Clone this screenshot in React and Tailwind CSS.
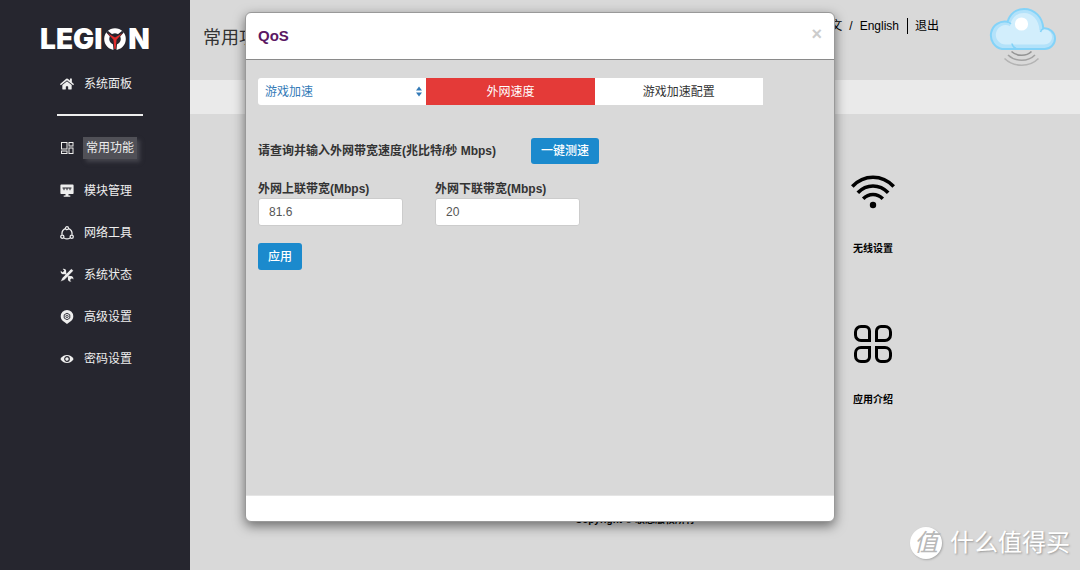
import { FaHome } from 'react-icons/fa';

const menu = [
    { label: '常用功能', icon: PanelIcon, active: true },
    { label: '模块管理', icon: ModuleIcon },
    { label: '网络工具', icon: NetworkIcon },
    { label: '系统状态', icon: ToolsIcon },
    { label: '高级设置', icon: AdvancedIcon },
    { label: '密码设置', icon: EyeIcon },
];

const shortcuts = [
    { label: '无线设置', icon: WifiIcon },
    { label: '应用介绍', icon: AppsIcon },
];

function PanelIcon() {
    return (
        <svg viewBox="0 0 14 14" className="size-3.5" fill="none" stroke="currentColor" strokeWidth="1">
            <rect x="1.500" y="1.500" width="5.500" height="6.500" />
            <rect x="9" y="1.500" width="4" height="3.500" />
            <rect x="1.500" y="10" width="5.500" height="2.500" />
            <rect x="9" y="7" width="4" height="5.500" />
        </svg>
    );
}

function ModuleIcon() {
    return (
        <svg viewBox="0 0 14 14" className="size-3.5" fill="currentColor">
            <path d="M1.2.6h11.600a.8.8 0 0 1 .8.8v7.800a.8.8 0 0 1-.8.8H1.2a.8.8 0 0 1-.8-.8V1.400a.8.8 0 0 1 .8-.8z" />
            <path d="M5.500 10h3v1.500h1.800v1.300H3.700v-1.300h1.800z" />
            <path d="M2.500 4h9M4 4v2.200M7 4v2.200M10 4v2.200" stroke="#26262f" strokeWidth="1" />
        </svg>
    );
}

function NetworkIcon() {
    return (
        <svg viewBox="0 0 14 14" className="size-3.5" fill="none" stroke="currentColor" strokeWidth="1.300">
            <path d="M5.300 2.700C3 3.600 1.700 6 2 8.800M8.700 2.700C11 3.600 12.300 6 12 8.800M4 12c1.900 1.200 4.100 1.200 6 0" />
            <circle cx="7" cy="2.200" r="1.500" />
            <circle cx="2.300" cy="10.700" r="1.600" />
            <circle cx="11.700" cy="10.700" r="1.600" />
        </svg>
    );
}

function ToolsIcon() {
    return (
        <svg viewBox="0 0 14 14" className="size-3.5" fill="currentColor">
            <path d="M3.500 3.500l7.500 7.500" stroke="currentColor" strokeWidth="2.400" />
            <path d="M.8 2.700l1.500 1.500 1.500-.3.400-1.500L2.700.9C4.300.3 6 1.200 6.200 3c.2 1.900-1.500 3.600-3.400 3.200C1.200 5.900.4 4.200.8 2.700z" />
            <path d="M13.300 11.600l-1.500-1.500-1.500.3-.4 1.500 1.500 1.500c-1.600.6-3.300-.3-3.500-2.100-.2-1.900 1.500-3.600 3.400-3.200 1.600.3 2.400 2 2 3.500z" />
            <path d="M11.300.7l2.100 2.100-9 9.200-3.800 1.600 1.600-3.700z" stroke="#26262f" strokeWidth=".4" />
        </svg>
    );
}

function AdvancedIcon() {
    return (
        <svg viewBox="0 0 14 14" className="size-3.5">
            <path d="M7 0a6.300 6.300 0 0 1 6.300 6.300c0 2.500-1.300 4.400-3.300 5.500L7 14l-3-2.200C2 10.700.7 8.800.7 6.300A6.300 6.300 0 0 1 7 0z" fill="currentColor" />
            <path d="M7 3.200l2.800 1.600v3.300L7 9.700 4.200 8.100V4.800z" fill="none" stroke="#26262f" strokeWidth=".9" />
            <circle cx="7" cy="6.400" r="1.200" fill="none" stroke="#26262f" strokeWidth=".8" />
        </svg>
    );
}

function EyeIcon() {
    return (
        <svg viewBox="0 0 14 14" className="size-3.5">
            <path d="M.4 7C1.900 4.500 4.200 3.100 7 3.100S12.100 4.500 13.600 7C12.100 9.500 9.800 10.900 7 10.900S1.900 9.500.4 7z" fill="currentColor" />
            <circle cx="7" cy="7" r="2.300" fill="none" stroke="#26262f" strokeWidth="1.200" />
        </svg>
    );
}

function WifiIcon() {
    return (
        <svg viewBox="0 0 44 36" className="h-9 w-11" fill="none" stroke="#000" strokeWidth="3.600">
            <path d="M1.300 12.500C13 .2 31 .2 42.700 12.500" />
            <path d="M6.800 18.700c8.700-9 21.700-9 30.400 0" />
            <path d="M12.200 24.700c5.700-5.600 13.900-5.600 19.600 0" />
            <circle cx="22" cy="31" r="3.200" fill="#000" stroke="none" />
        </svg>
    );
}

function AppsIcon() {
    return (
        <svg viewBox="0 0 38 38" className="size-[38px]" fill="none" stroke="#000" strokeWidth="3">
            <path d="M7 1.500h4A4.500 4.500 0 0 1 15.500 6v9.500H7A5.500 5.500 0 0 1 1.500 10V7A5.500 5.500 0 0 1 7 1.500z" />
            <path d="M31 1.500h-4A4.500 4.500 0 0 0 22.500 6v9.500H31a5.500 5.500 0 0 0 5.500-5.500V7A5.500 5.500 0 0 0 31 1.500z" />
            <path d="M7 36.500h4a4.500 4.500 0 0 0 4.500-4.500v-9.500H7A5.500 5.500 0 0 0 1.500 28v3A5.500 5.500 0 0 0 7 36.500z" />
            <path d="M31 36.500h-4a4.500 4.500 0 0 1-4.500-4.500v-9.500H31a5.500 5.500 0 0 1 5.500 5.500v3a5.500 5.500 0 0 1-5.500 5.500z" />
        </svg>
    );
}

function CloudIcon() {
    return (
        <svg viewBox="0 0 68 60" className="h-[60px] w-[68px]" fill="none">
            <path
                d="M14 42A13.200 13.200 0 1 1 19.500 14.800C22 6.500 28.500 2 36 2c10.500 0 18.500 8 19.300 19.300A10.400 10.400 0 1 1 56 42z"
                fill="#b3e2fa"
                stroke="#84d3f8"
                strokeWidth="2"
            />
            <path
                d="M18 37.500a9.700 9.700 0 1 1 4-18.300C23.500 10.500 29 6 36 6c8.500 0 15 6.500 15.500 17.500 7-3 12.500 1 12.500 6.500 0 4.500-3.500 7.500-8 7.500z"
                fill="#d2eefc"
            />
            <path d="M19 14.800c1.500.2 2.800 1 4 2M52.500 25c.3-1.500 1.500-2.800 3-3.500M24 36.500c.3 2.500 1.700 4 4 5" stroke="#84d3f8" strokeWidth="1.600" />
            <circle cx="33.500" cy="17" r="6.600" fill="#fff" />
            <path d="M23.500 44.500c5.500 5 15 5 20 0" stroke="#949494" strokeWidth="1.600" />
            <path d="M20 48c7.500 7 20 7 27 0" stroke="#a2a2a2" strokeWidth="1.600" />
            <path d="M16.500 51.500c9.500 9 25 9 34 0" stroke="#b4b4b4" strokeWidth="1.600" />
        </svg>
    );
}

function Logo() {
    return (
        <div className="flex items-center gap-0.5 font-['Inter',sans-serif] text-[28px] leading-7 font-black text-white">
            <span>LEGI</span>
            <svg viewBox="0 0 22 22" className="size-[22px]" fill="none">
                <circle cx="11" cy="11" r="8.300" stroke="#fff" strokeWidth="5" />
                <path d="M2.200 4.600l1.600-1.800L11 8.500l7.200-5.700 1.600 1.800-6.400 7L12.500 22h-3l-.9-10.400z" fill="#26262f" />
                <path d="M3.500 5.300L11 9.600l7.500-4.300-6 6.500L11.700 21h-1.400l-.8-9.200z" fill="#e22d2d" />
            </svg>
            <span>N</span>
        </div>
    );
}

function Sidebar() {
    return (
        <aside className="flex w-[190px] shrink-0 flex-col bg-[#26262f] pt-[25px] text-[#eee]">
            <div className="flex justify-center">
                <Logo />
            </div>
            <a href="#" className="mt-5 ml-[60px] flex h-[21px] items-center gap-2.5">
                <FaHome className="size-3.5 shrink-0" />
                系统面板
            </a>
            <hr className="mt-5 ml-[57px] w-[86px] border-t-2 border-[#eee]" />
            <nav className="mt-[11px]">
                {menu.map(({ label, icon: Icon, active }) => (
                    <a key={label} href="#" className="ml-[60px] flex h-[42px] items-center gap-2.5 first:mb-px">
                        <Icon />
                        <span className={active ? '-ml-px bg-[#505057] px-[3px] py-[3px] shadow-[3px_3px_4px_#44444c]' : ''}>
                            {label}
                        </span>
                    </a>
                ))}
            </nav>
        </aside>
    );
}

function BandwidthField({ id, label, value }) {
    return (
        <div className="flex w-[145px] flex-col">
            <label htmlFor={id} className="leading-[18px] font-bold whitespace-nowrap">
                {label}
            </label>
            <input
                id={id}
                type="text"
                defaultValue={value}
                className="h-7 w-full rounded-[3px] border border-[#ccc] bg-white px-2.5 text-[#555]"
            />
        </div>
    );
}

function QosModal() {
    return (
        <div
            role="dialog"
            aria-labelledby="qos-title"
            className="w-full max-w-[590px] overflow-hidden rounded-md border border-[#999] bg-white text-[#333] shadow-[0_4px_12px_rgba(0,0,0,0.5)]"
        >
            <div className="flex h-[47px] items-center justify-between border-b border-[#8a8a8a] px-3">
                <h2 id="qos-title" className="text-[15px] font-bold text-[#5b1763]">
                    QoS
                </h2>
                <button type="button" aria-label="关闭" className="pb-1 text-lg font-bold text-[#ccc]">
                    ×
                </button>
            </div>

            <div className="min-h-[435px] bg-[#d9d9d9] px-3 pt-[18px]">
                <div className="grid max-w-[505px] grid-cols-3">
                    <div className="relative">
                        <select
                            aria-label="QoS 模式"
                            className="h-[27px] w-full appearance-none rounded-l-[3px] bg-white pl-[7px] text-[#337ab7]"
                        >
                            <option>游戏加速</option>
                        </select>
                        <svg viewBox="0 0 6 10" className="pointer-events-none absolute top-2 right-1 h-[11px] w-1.5" fill="#337ab7">
                            <path d="M3 0l3 4H0zM3 10L0 6h6z" />
                        </svg>
                    </div>
                    <button type="button" className="h-[27px] bg-[#e43a38] text-white">
                        外网速度
                    </button>
                    <button type="button" className="h-[27px] bg-white">
                        游戏加速配置
                    </button>
                </div>

                <div className="mt-[33px] flex items-center gap-[35px]">
                    <p className="font-bold">请查询并输入外网带宽速度(兆比特/秒 Mbps)</p>
                    <button type="button" className="h-[26px] rounded-[3px] bg-[#1b8acd] px-2.5 font-medium text-white">
                        一键测速
                    </button>
                </div>

                <div className="mt-4 flex gap-8">
                    <BandwidthField id="uplink" label="外网上联带宽(Mbps)" value="81.6" />
                    <BandwidthField id="downlink" label="外网下联带宽(Mbps)" value="20" />
                </div>

                <button type="button" className="mt-[17px] h-[27px] rounded-[3px] bg-[#1b8acd] px-2.5 font-medium text-white">
                    应用
                </button>
            </div>

            <div className="h-[26px] border-t border-[#e5e5e5]" />
        </div>
    );
}

export default function App() {
    return (
        <div className="relative flex min-h-screen bg-[#d9d9d9] font-['Liberation_Sans','Noto_Sans_CJK_SC',sans-serif] text-xs text-black">
            <Sidebar />

            <main className="min-w-0 flex-1">
                <header className="flex h-20 items-start justify-between pr-6 pl-[13px]">
                    <h1 className="pt-6 text-lg text-[#333]">常用功能</h1>
                    <div className="flex items-start">
                        <div className="mt-[17px] mr-[49px] flex h-[17px] items-center">
                            <a href="#">中文</a>
                            <span className="px-[7px]">/</span>
                            <a href="#">English</a>
                            <a href="#" className="ml-2 border-l border-black pl-[7px]">
                                退出
                            </a>
                        </div>
                        <div className="mt-[7px]">
                            <CloudIcon />
                        </div>
                    </div>
                </header>
                <div className="h-[34px] bg-[#eaeaea]" />

                <section className="mr-[177px] flex flex-col items-end gap-[70px] pt-[60px] text-[10px] font-bold">
                    {shortcuts.map(({ label, icon: Icon }) => (
                        <a key={label} href="#" className="flex h-[81px] w-[60px] flex-col items-center justify-between">
                            <Icon />
                            <span>{label}</span>
                        </a>
                    ))}
                </section>

                <footer className="mt-[106px] text-center text-[10px] leading-4 font-bold">Copyright © 联想版权所有</footer>
            </main>

            <div className="absolute inset-x-0 top-3 flex justify-center">
                <QosModal />
            </div>

            <div className="absolute right-2.5 bottom-[11px] flex items-center gap-2 text-2xl text-white">
                <span className="flex size-8 items-center justify-center rounded-full bg-white text-[#b8b8b8] italic shadow-[1px_1px_2px_#aaa]">
                    值
                </span>
                <span className="[text-shadow:1px_1px_2px_#999]">什么值得买</span>
            </div>
        </div>
    );
}
